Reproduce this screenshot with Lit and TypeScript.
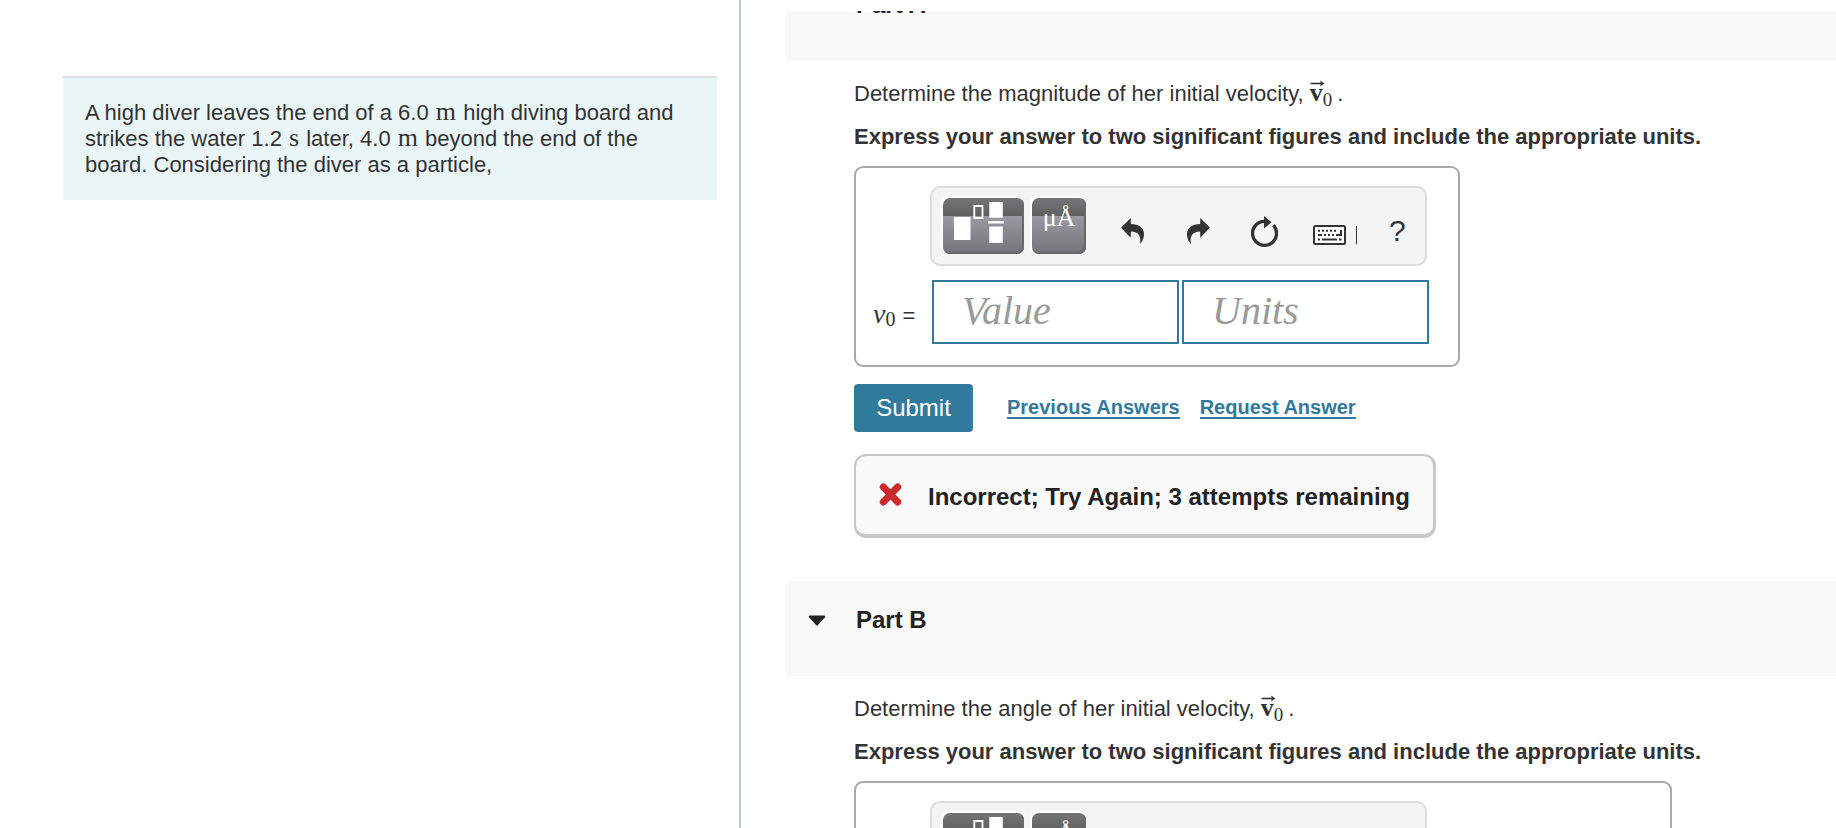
import { LitElement, html, css, nothing } from "lit";
import { customElement, property } from "lit/decorators.js";

const undoPath =
  "M0 9.8L9.8 0V6C18 6 23 10 23 16C23 20 21.5 23.5 19 26C20.5 19 18 13.6 9.8 13.6V19.8Z";

/** Vector v with a zero subscript, as used in the question text. */
@customElement("vector-v")
export class VectorV extends LitElement {
  static styles = css`
    :host {
      display: inline-block;
      position: relative;
      font-family: "Liberation Serif", serif;
      line-height: 20px;
      margin-right: 5px;
    }
    b {
      font-size: 26px;
      line-height: 20px;
    }
    sub {
      font-size: 19px;
      line-height: 0;
      vertical-align: -5px;
    }
    svg {
      position: absolute;
      left: 0;
      top: -3px;
    }
  `;
  render() {
    return html`<b>v</b><sub>0</sub
      ><svg width="15" height="7" viewBox="0 0 15 7" aria-hidden="true">
        <path d="M0.5 3.5H12" stroke="#333" stroke-width="1.6" />
        <path d="M10 0.5L14.5 3.5L10 6.5L11 3.5Z" fill="#333" />
      </svg>`;
  }
}

/** Equation editor: toolbar plus value and units entry. */
@customElement("answer-editor")
export class AnswerEditor extends LitElement {
  @property({ type: Boolean }) wide = false;

  static styles = css`
    :host {
      display: block;
    }
    * {
      box-sizing: border-box;
    }
    .box {
      border: 2px solid #a9a9a9;
      border-radius: 9px;
      width: fit-content;
      padding: 18px 29px 21px 17px;
      display: grid;
      grid-template-columns: auto auto;
      column-gap: 14px;
      row-gap: 14px;
      align-items: center;
      background: #fff;
    }
    .box.wide {
      padding-right: 241px;
    }
    .bar {
      grid-column: 2;
      height: 80px;
      margin: 0 2px 0 -2px;
      border: 2px solid #dcdcdc;
      border-radius: 10px;
      background: #f4f4f4;
      display: flex;
      align-items: center;
      padding: 0 11px;
      width: 497px;
    }
    .group {
      display: flex;
      gap: 8px;
      margin-right: 29px;
    }
    button {
      border: 0;
      padding: 0;
      margin: 0;
      background: none;
      color: #333;
      font: 30px "Liberation Sans", Arial, sans-serif;
      display: block;
    }
    .tool {
      height: 56px;
      border-radius: 7px;
      background: linear-gradient(
        #757577 0,
        #606060 18px,
        #9a99a3 18px,
        #747377 56px
      );
      box-shadow:
        -2px -2px 0 #fff,
        inset -2px -2px 0 #68686a;
      color: #fff;
      overflow: hidden;
    }
    .templates {
      width: 81px;
    }
    .symbols {
      width: 54px;
      font: 26px/40px "Liberation Serif", serif;
      padding-bottom: 16px;
    }
    .icon {
      width: 34px;
      height: 34px;
    }
    svg {
      display: block;
      margin: 0 auto;
    }
    .icons {
      display: flex;
      gap: 32px;
      align-items: center;
      padding-top: 10px;
    }
    .keys {
      width: 44px;
      padding-top: 8px;
    }
    .help {
      width: 16px;
      line-height: 34px;
    }
    label {
      min-width: 45px;
      font: italic 28px/30px "Liberation Serif", serif;
      color: #333;
      white-space: nowrap;
      padding-top: 4px;
    }
    label span {
      font-style: normal;
      font-size: 20px;
      vertical-align: -3px;
      line-height: 0;
    }
    label b {
      font: 22px/0 "Liberation Sans", Arial, sans-serif;
    }
    .fields {
      display: flex;
      gap: 3px;
    }
    input {
      width: 247px;
      height: 64px;
      border: 2px solid #327a9c;
      border-radius: 0;
      margin: 0;
      padding: 0 28px 4px;
      font: italic 40px "Liberation Serif", serif;
      color: #333;
      background: #fff;
      outline: none;
    }
    input::placeholder {
      color: #999;
      opacity: 1;
    }
  `;

  render() {
    return html`<div class="box ${this.wide ? "wide" : ""}">
      <div class="bar">
        <div class="group">
          <button class="tool templates" aria-label="Templates">
            <svg width="81" height="56" viewBox="0 0 81 56">
              <path d="M11 19H27.5V42H11Z M46.3 4H59.8V19.7H46.3Z M46.3 28.5H59.8V45H46.3Z M45 23H61V25.4H45Z" fill="#fff" />
              <path d="M31.3 8H39.5V20H31.3Z" fill="none" stroke="#fff" stroke-width="1.8" />
            </svg>
          </button>
          <button class="tool symbols" aria-label="Symbols">μÅ</button>
        </div>
        <div class="icons">
          <button class="icon" aria-label="Undo">
            <svg width="23" height="26" viewBox="0 0 23 26">
              <path d=${undoPath} fill="#333" />
            </svg>
          </button>
          <button class="icon" aria-label="Redo">
            <svg width="23" height="26" viewBox="0 0 23 26">
              <path d=${undoPath} fill="#333" transform="matrix(-1 0 0 1 23 0)" />
            </svg>
          </button>
          <button class="icon" aria-label="Reset">
            <svg width="27" height="31" viewBox="0 0 27 31">
              <path d="M14 5.3A12 12 0 1 0 22.4 9.2" fill="none" stroke="#333" stroke-width="3.3" />
              <path d="M13 0L20.5 6.2L13 12.4Z" fill="#333" />
            </svg>
          </button>
          <button class="keys" aria-label="Keyboard shortcuts">
            <svg width="44" height="20" viewBox="1 1 44 20">
              <rect x="2" y="2" width="31" height="18" rx="1.5" fill="#fff" stroke="#333" stroke-width="2" />
              <path d="M6 6.8H26" stroke="#333" stroke-width="2" stroke-dasharray="2 2" />
              <path d="M6 11H10M12 11H14M16 11H18M20 11H22M24 11H29V6M6 15.6H8M10 15.6H25M27 15.6H29.5" fill="none" stroke="#333" stroke-width="2" />
              <path d="M44.5 2V20" stroke="#333" />
            </svg>
          </button>
          <button class="help" aria-label="Help">?</button>
        </div>
      </div>
      <label for="value">v<span>0</span> <b>=</b></label>
      <div class="fields">
        <input id="value" placeholder="Value" />
        <input aria-label="Units" placeholder="Units" />
      </div>
    </div>`;
  }
}

@customElement("app-root")
export class AppRoot extends LitElement {
  static styles = css`
    :host {
      display: flex;
      height: 100vh;
      overflow: hidden;
      background: #fff;
      color: #333;
      font: 22px/26px "Liberation Sans", Arial, sans-serif;
    }
    * {
      box-sizing: border-box;
    }
    .problem {
      flex: 0 0 741px;
      border-right: 2px solid #b9c9da;
      padding: 76px 22px 0 63px;
    }
    .statement {
      margin: 0;
      padding: 22px;
      border-top: 2px solid #dcdfdf;
      background: #eaf5f8;
    }
    .unit {
      font-family: "Liberation Serif", serif;
      font-size: 26px;
      line-height: 0;
      margin: 0 1px;
    }
    .parts {
      flex: 1;
      min-width: 0;
      margin: 11px 0 0 44px;
      overflow: hidden;
    }
    .scrolled {
      margin-top: -45px;
    }
    .head {
      height: 95px;
      background: #f9f9f9;
      display: flex;
      align-items: flex-start;
      padding: 25px 23px;
    }
    h2 {
      margin: 0;
      font-size: 24px;
      line-height: 28px;
      color: #222;
    }
    .toggle {
      border: 0;
      padding: 9px 0 0;
      margin: 0 30px 0 0;
      background: none;
    }
    svg {
      display: block;
    }
    .body {
      padding-left: 69px;
    }
    p {
      margin: 0;
    }
    .ask {
      padding-top: 20px;
    }
    .hint {
      font-weight: bold;
      padding: 17px 0 16px;
    }
    .actions {
      display: flex;
      align-items: center;
      margin: 17px 0 22px;
    }
    .submit {
      width: 119px;
      height: 48px;
      border: 0;
      border-radius: 4px;
      background: #327a9c;
      color: #fff;
      font: 24px "Liberation Sans", Arial, sans-serif;
      margin-right: 34px;
      padding: 0;
    }
    a {
      font-size: 20px;
      font-weight: bold;
      line-height: 20px;
      color: #327a9c;
      text-decoration: none;
      border-bottom: 2px solid #327a9c;
      margin-right: 20px;
    }
    .result {
      display: flex;
      align-items: center;
      width: fit-content;
      height: 84px;
      padding: 0 23px;
      border: 2px solid #c8c8c8;
      border-width: 2px 3px 4px 2px;
      border-radius: 12px;
      background: #f9f9f9;
      color: #222;
      font-size: 24px;
      font-weight: bold;
      margin-bottom: 43px;
    }
    .result svg {
      margin: 0 26px 2px 0;
    }
    .result span {
      padding-top: 4px;
    }
  `;

  private part(name: string, quantity: string, wide: boolean, result: unknown) {
    return html`<section>
      <div class="head">
        <button class="toggle" aria-label="Collapse ${name}">
          <svg width="18" height="11" viewBox="0 0 18 11">
            <path d="M1.5 0.5H16.5Q18 1 17 2.2L10 10Q9 11 8 10L1 2.2Q0 1 1.5 0.5Z" fill="#222" />
          </svg>
        </button>
        <h2>${name}</h2>
      </div>
      <div class="body">
        <p class="ask">Determine the ${quantity} of her initial velocity, <vector-v></vector-v>.</p>
        <p class="hint">Express your answer to two significant figures and include the appropriate units.</p>
        <answer-editor ?wide=${wide}></answer-editor>
        ${result}
      </div>
    </section>`;
  }

  render() {
    const result = html`<div class="actions">
        <button class="submit">Submit</button>
        <a href="#previous">Previous Answers</a>
        <a href="#request">Request Answer</a>
      </div>
      <div class="result" role="status">
        <svg width="23" height="23" viewBox="0 0 23 23" aria-hidden="true">
          <path d="M4.3 4L18.7 19M18.7 4L4.3 19" stroke="#cb2a2d" stroke-width="7" stroke-linecap="round" />
        </svg>
        <span>Incorrect; Try Again; 3 attempts remaining</span>
      </div>`;
    return html`
      <div class="problem">
        <p class="statement">
          A high diver leaves the end of a 6.0 <span class="unit">m</span> high diving board and strikes
          the water 1.2 <span class="unit">s</span> later, 4.0 <span class="unit">m</span> beyond the end
          of the board. Considering the diver as a particle,
        </p>
      </div>
      <main class="parts">
        <div class="scrolled">
          ${this.part("Part A", "magnitude", false, result)}
          ${this.part("Part B", "angle", true, nothing)}
        </div>
      </main>
    `;
  }
}
